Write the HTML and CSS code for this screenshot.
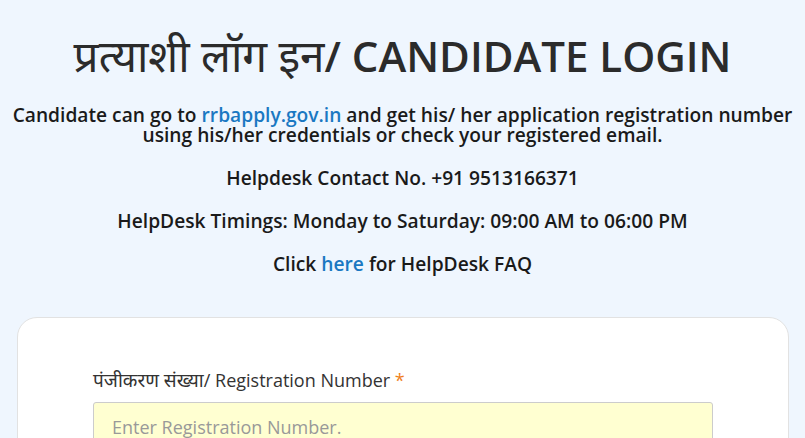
FILE: index.html
```html
<!DOCTYPE html>
<html lang="hi">
<head>
<meta charset="utf-8">
<title>Candidate Login</title>
<link rel="stylesheet" href="styles.css">
</head>
<body>
<main class="page">
  <h1 class="title"><span class="deva deva-title">प्रत्याशी लॉग इन</span>/ CANDIDATE LOGIN</h1>
  <p class="info">Candidate can go to <a class="link" href="#">rrbapply.gov.in</a> and get his/ her application registration number using his/her credentials or check your registered email.</p>
  <p class="info">Helpdesk Contact No. +91 9513166371</p>
  <p class="info">HelpDesk Timings: Monday to Saturday: 09:00 AM to 06:00 PM</p>
  <p class="info">Click <a class="link" href="#">here</a> for HelpDesk FAQ</p>
  <section class="card">
    <label class="label" for="reg"><span class="deva deva-label">पंजीकरण संख्या</span>/ Registration Number <span class="req">*</span></label>
    <input class="input" id="reg" type="text" placeholder="Enter Registration Number.">
  </section>
</main>
</body>
</html>
```
FILE: styles.css
```css
html, body {
  margin: 0;
  padding: 0;
  background: #eff6fe;
}
body {
  font-family: "Open Sans", "Noto Sans", "Noto Sans Devanagari", sans-serif;
  color: #222;
}
.page {
  padding: 24px 8px 0 8px;
}
.title {
  margin: 0 0 17px;
  text-align: center;
  font-size: 42px;
  font-weight: 600;
  line-height: 64px;
  color: #2b2b2b;
}
.deva {
  font-weight: 400;
}
.deva-title {
  font-size: 44px;
  line-height: 1;
}
.deva-label {
  font-size: 19px;
  line-height: 1;
}
.info {
  margin: 0 0 23px;
  text-align: center;
  font-size: 19.2px;
  font-weight: 600;
  line-height: 20px;
  color: #1a1a1a;
}
.link {
  color: #1a78c2;
  text-decoration: none;
}
.card {
  margin: 43px 8px 0 9px;
  background: #fff;
  border: 1px solid #e2e2e2;
  border-radius: 20px;
  padding: 50px 75px 0;
  height: 140px;
  display: flex;
  flex-direction: column;
  gap: 9px;
}
.label {
  font-size: 18px;
  line-height: 25px;
  color: #333;
}
.req {
  color: #f07f1c;
}
.input {
  height: 50px;
  box-sizing: border-box;
  background: #ffffd1;
  border: 1px solid #ccc;
  border-radius: 3px;
  padding: 0 18px;
  font-family: "Open Sans", sans-serif;
  font-size: 18px;
  color: #333;
}
.input::placeholder {
  color: #999;
}
```
